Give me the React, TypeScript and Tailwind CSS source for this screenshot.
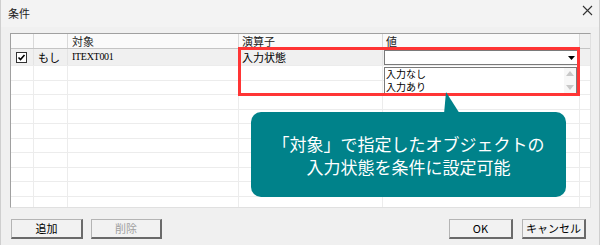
const font = "font-['Meiryo_UI','Noto_Sans_CJK_JP',sans-serif]";

const Check = () => (
  <svg width="11" height="11" viewBox="0 0 11 11">
    <rect x="0.5" y="0.5" width="10" height="10" fill="#fff" stroke="#333" />
    <path d="M2.5 5.5 L4.5 7.5 L8.5 3" fill="none" stroke="#000" strokeWidth="1.6" />
  </svg>
);

const rowCells = "flex h-[14.5px] border-b border-[#ececec]";

const EmptyRow = () => (
  <div className={rowCells}>
    <div className="w-[23px] shrink-0 border-r border-[#ececec]" />
    <div className="w-[34px] shrink-0 border-r border-[#ececec]" />
    <div className="w-[171px] shrink-0 border-r border-[#ececec]" />
    <div className="w-[144px] shrink-0 border-r border-[#ececec]" />
    <div className="w-[197px] shrink-0 border-r border-[#ececec]" />
    <div className="flex-1" />
  </div>
);

const Btn = ({ label, disabled, w }: { label: string; disabled?: boolean; w: string }) => (
  <button
    className={`${w} h-[20px] border-t border-l border-[#b4b4b4] border-r-2 border-b-2 border-r-[#6a6a6a] border-b-[#6a6a6a] bg-[#f2f2f2] text-[11px] leading-none ${
      disabled ? "text-[#a0a0a0]" : "text-black"
    }`}
  >
    {label}
  </button>
);

export default function App() {
  return (
    <div className={`relative w-[600px] h-[245px] overflow-hidden bg-[#f0f0f0] border-x border-[#cfcfcf] ${font}`}>
      <div className="flex h-[27px] items-center justify-between pl-[7px] pr-[6px] bg-[#f3f3f3]">
        <span className="text-[11px] text-[#222]">条件</span>
        <svg width="11" height="11" viewBox="0 0 11 11" className="mb-[6px]">
          <path d="M1 1 L10 10 M10 1 L1 10" stroke="#333" strokeWidth="1.1" />
        </svg>
      </div>

      <div className="ml-[9px] mt-[6px] w-[581px] h-[175px] overflow-hidden border-t border-l border-[#a0a0a0] border-r border-r-[#e0e0e0] border-b border-b-[#e0e0e0] bg-white">
        <div className="flex h-[15px] border-b border-[#c4c4c4] bg-[#fafafa] text-[11px] leading-[14px] text-[#222]">
          <div className="w-[23px] shrink-0 border-r border-[#d9d9d9]" />
          <div className="w-[34px] shrink-0 border-r border-[#d9d9d9]" />
          <div className="w-[171px] shrink-0 border-r border-[#d9d9d9] pl-[4px]">対象</div>
          <div className="w-[144px] shrink-0 border-r border-[#d9d9d9] pl-[3px]">演算子</div>
          <div className="w-[197px] shrink-0 border-r border-[#d9d9d9] pl-[3px]">値</div>
          <div className="flex-1 bg-[#f0f0f0]" />
        </div>
        <div className="flex h-[17px] border-b border-[#ececec] bg-[#f0f0f0] text-[11px] leading-none text-black">
          <div className="w-[23px] shrink-0 border-r border-[#e4e4e4] flex items-center pl-[5px]">
            <Check />
          </div>
          <div className="w-[34px] shrink-0 border-r border-[#e4e4e4] flex items-center pl-[4px]">もし</div>
          <div className="w-[171px] shrink-0 border-r border-[#e4e4e4] flex items-center pl-[4px] font-['Liberation_Serif',serif] text-[10px] tracking-[-0.3px]">
            ITEXT001
          </div>
          <div className="w-[144px] shrink-0 border-r border-[#e4e4e4] flex items-center pl-[3px]">入力状態</div>
          <div className="w-[197px] shrink-0 border-r border-[#e4e4e4] pl-[1px] pt-[1px]">
            <div className="flex h-[15px] w-[194px] items-center justify-end border border-[#7a7a7a] bg-white pr-[2px]">
              <svg width="7" height="4" viewBox="0 0 7 4">
                <path d="M0 0 H7 L3.5 4 Z" fill="#000" />
              </svg>
            </div>
          </div>
          <div className="flex-1" />
        </div>
        {Array.from({ length: 10 }).map((_, i) => (
          <EmptyRow key={i} />
        ))}
      </div>

      <div className="mt-[11px] flex items-center px-[10px]">
        <div className="flex gap-[8px]">
          <Btn label="追加" w="w-[72px]" />
          <Btn label="削除" w="w-[71px]" disabled />
        </div>
        <div className="ml-auto flex gap-[9px] mr-[3px]">
          <Btn label="OK" w="w-[64px]" />
          <Btn label="キャンセル" w="w-[64px]" />
        </div>
      </div>

      {/* dropdown list */}
      <div className="absolute left-[383px] top-[67px] w-[193px] h-[27px] border border-[#7a7a7a] bg-white flex">
        <div className="flex-1 flex flex-col text-[10px] text-black pl-[1px]">
          <div className="h-[12px] leading-[12px]">入力なし</div>
          <div className="h-[12px] leading-[12px] mt-[1px]">入力あり</div>
        </div>
        <div className="w-[12px] flex flex-col items-center justify-between py-[3px] bg-[#f7f7f7]">
          <svg width="8" height="5" viewBox="0 0 8 5">
            <path d="M0 5 L4 0 L8 5 Z" fill="#c8c8c8" />
          </svg>
          <svg width="8" height="5" viewBox="0 0 8 5">
            <path d="M0 0 H8 L4 5 Z" fill="#c8c8c8" />
          </svg>
        </div>
      </div>

      {/* highlight */}
      <div className="absolute left-[237px] top-[47px] w-[342px] h-[49px] border-[3px] border-[#ff3535]" />

      {/* callout */}
      <svg className="absolute left-[442px] top-[92px]" width="18" height="22" viewBox="0 0 18 22">
        <path d="M1 22 L3 0 L17 22 Z" fill="#00828a" />
      </svg>
      <div className="absolute left-[250px] top-[112px] w-[315px] h-[85px] rounded-[10px] bg-[#00828a] flex flex-col items-center justify-center text-white text-[17px] leading-[23px] font-['Noto_Sans_CJK_JP',sans-serif]">
        <div>「対象」で指定したオブジェクトの</div>
        <div>入力状態を条件に設定可能</div>
      </div>
    </div>
  );
}
